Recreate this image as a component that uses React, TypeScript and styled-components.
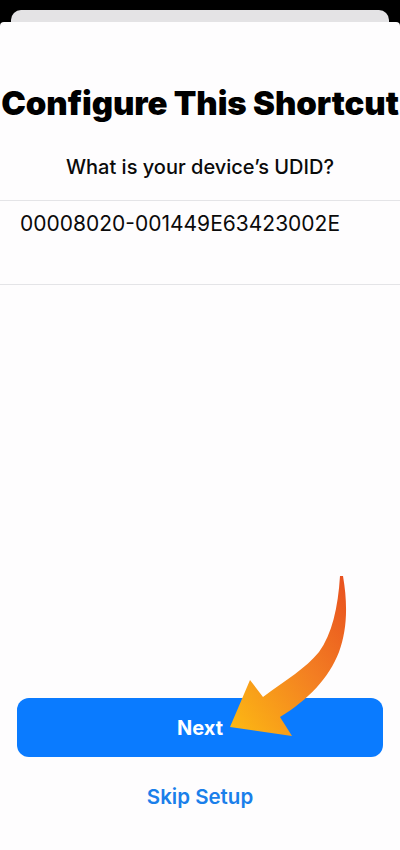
import React from "react";
import styled, { createGlobalStyle } from "styled-components";

const Global = createGlobalStyle`
  html, body { margin: 0; padding: 0; background: #000; }
  body { font-family: Inter, "Noto Sans", "Liberation Sans", sans-serif; -webkit-font-smoothing: antialiased; }
  * { box-sizing: border-box; }
`;

const Screen = styled.div`
  position: relative;
  width: 400px;
  height: 850px;
  background: #000;
  padding-top: 10px;
  display: flex;
  flex-direction: column;
  overflow: hidden;
`;

const BackSheet = styled.div`
  height: 12px;
  margin: 0 11px;
  background: #e4e3e5;
  border-radius: 10px 10px 0 0;
  flex: none;
`;

const Sheet = styled.div`
  flex: 1;
  background: #fefdfe;
  border-radius: 4px 4px 0 0;
  display: flex;
  flex-direction: column;
  padding-top: 61px;
  padding-bottom: 41px;
`;

const Title = styled.h1`
  margin: 0;
  font-size: 33px;
  line-height: 40px;
  font-weight: 900;
  color: #000;
  text-align: center;
  white-space: nowrap;
  letter-spacing: -0.1px;
`;

const Question = styled.p`
  margin: 32px 0 21px;
  font-size: 20px;
  line-height: 24px;
  font-weight: 500;
  color: #0a0a0a;
  text-align: center;
`;

const InputRow = styled.div`
  height: 85px;
  border-top: 1px solid #e4e4e7;
  border-bottom: 1px solid #e4e4e7;
  padding: 11px 20px 0;
  font-size: 21px;
  line-height: 24px;
  font-weight: 400;
  color: #0a0a0a;
`;

const Spacer = styled.div`
  flex: 1;
`;

const PrimaryButton = styled.button`
  margin: 0 17px;
  height: 59px;
  border: none;
  border-radius: 12px;
  background: #0a7bff;
  color: #fff;
  font-family: inherit;
  font-size: 20px;
  font-weight: 700;
  flex: none;
`;

const LinkButton = styled.button`
  margin-top: 28px;
  align-self: center;
  border: none;
  background: none;
  padding: 0;
  color: #1a7fea;
  font-family: inherit;
  font-size: 20.5px;
  line-height: 24px;
  font-weight: 600;
`;

const ArrowOverlay = styled.svg`
  position: absolute;
  left: 220px;
  top: 570px;
  width: 130px;
  height: 175px;
  pointer-events: none;
`;

function Arrow() {
  return (
    <ArrowOverlay viewBox="0 0 130 175">
      <defs>
        <linearGradient id="arrowGrad" x1="1" y1="0" x2="0" y2="1">
          <stop offset="0" stopColor="#e8501f" />
          <stop offset="0.45" stopColor="#f37e22" />
          <stop offset="1" stopColor="#fdbb12" />
        </linearGradient>
      </defs>
      <path
        d="M123,6 C128,35 127,60 119,82 C109,108 88,130 60,147 L72,166 L10,157 L30,110 L43,127 C66,110 86,98 99,82 C112,64 118,38 120,6 Z"
        fill="url(#arrowGrad)"
      />
    </ArrowOverlay>
  );
}

export default function App() {
  return (
    <>
      <Global />
      <Screen>
        <BackSheet />
        <Sheet>
          <Title>Configure This Shortcut</Title>
          <Question>What is your device’s UDID?</Question>
          <InputRow>00008020-001449E63423002E</InputRow>
          <Spacer />
          <PrimaryButton>Next</PrimaryButton>
          <LinkButton>Skip Setup</LinkButton>
        </Sheet>
        <Arrow />
      </Screen>
    </>
  );
}
